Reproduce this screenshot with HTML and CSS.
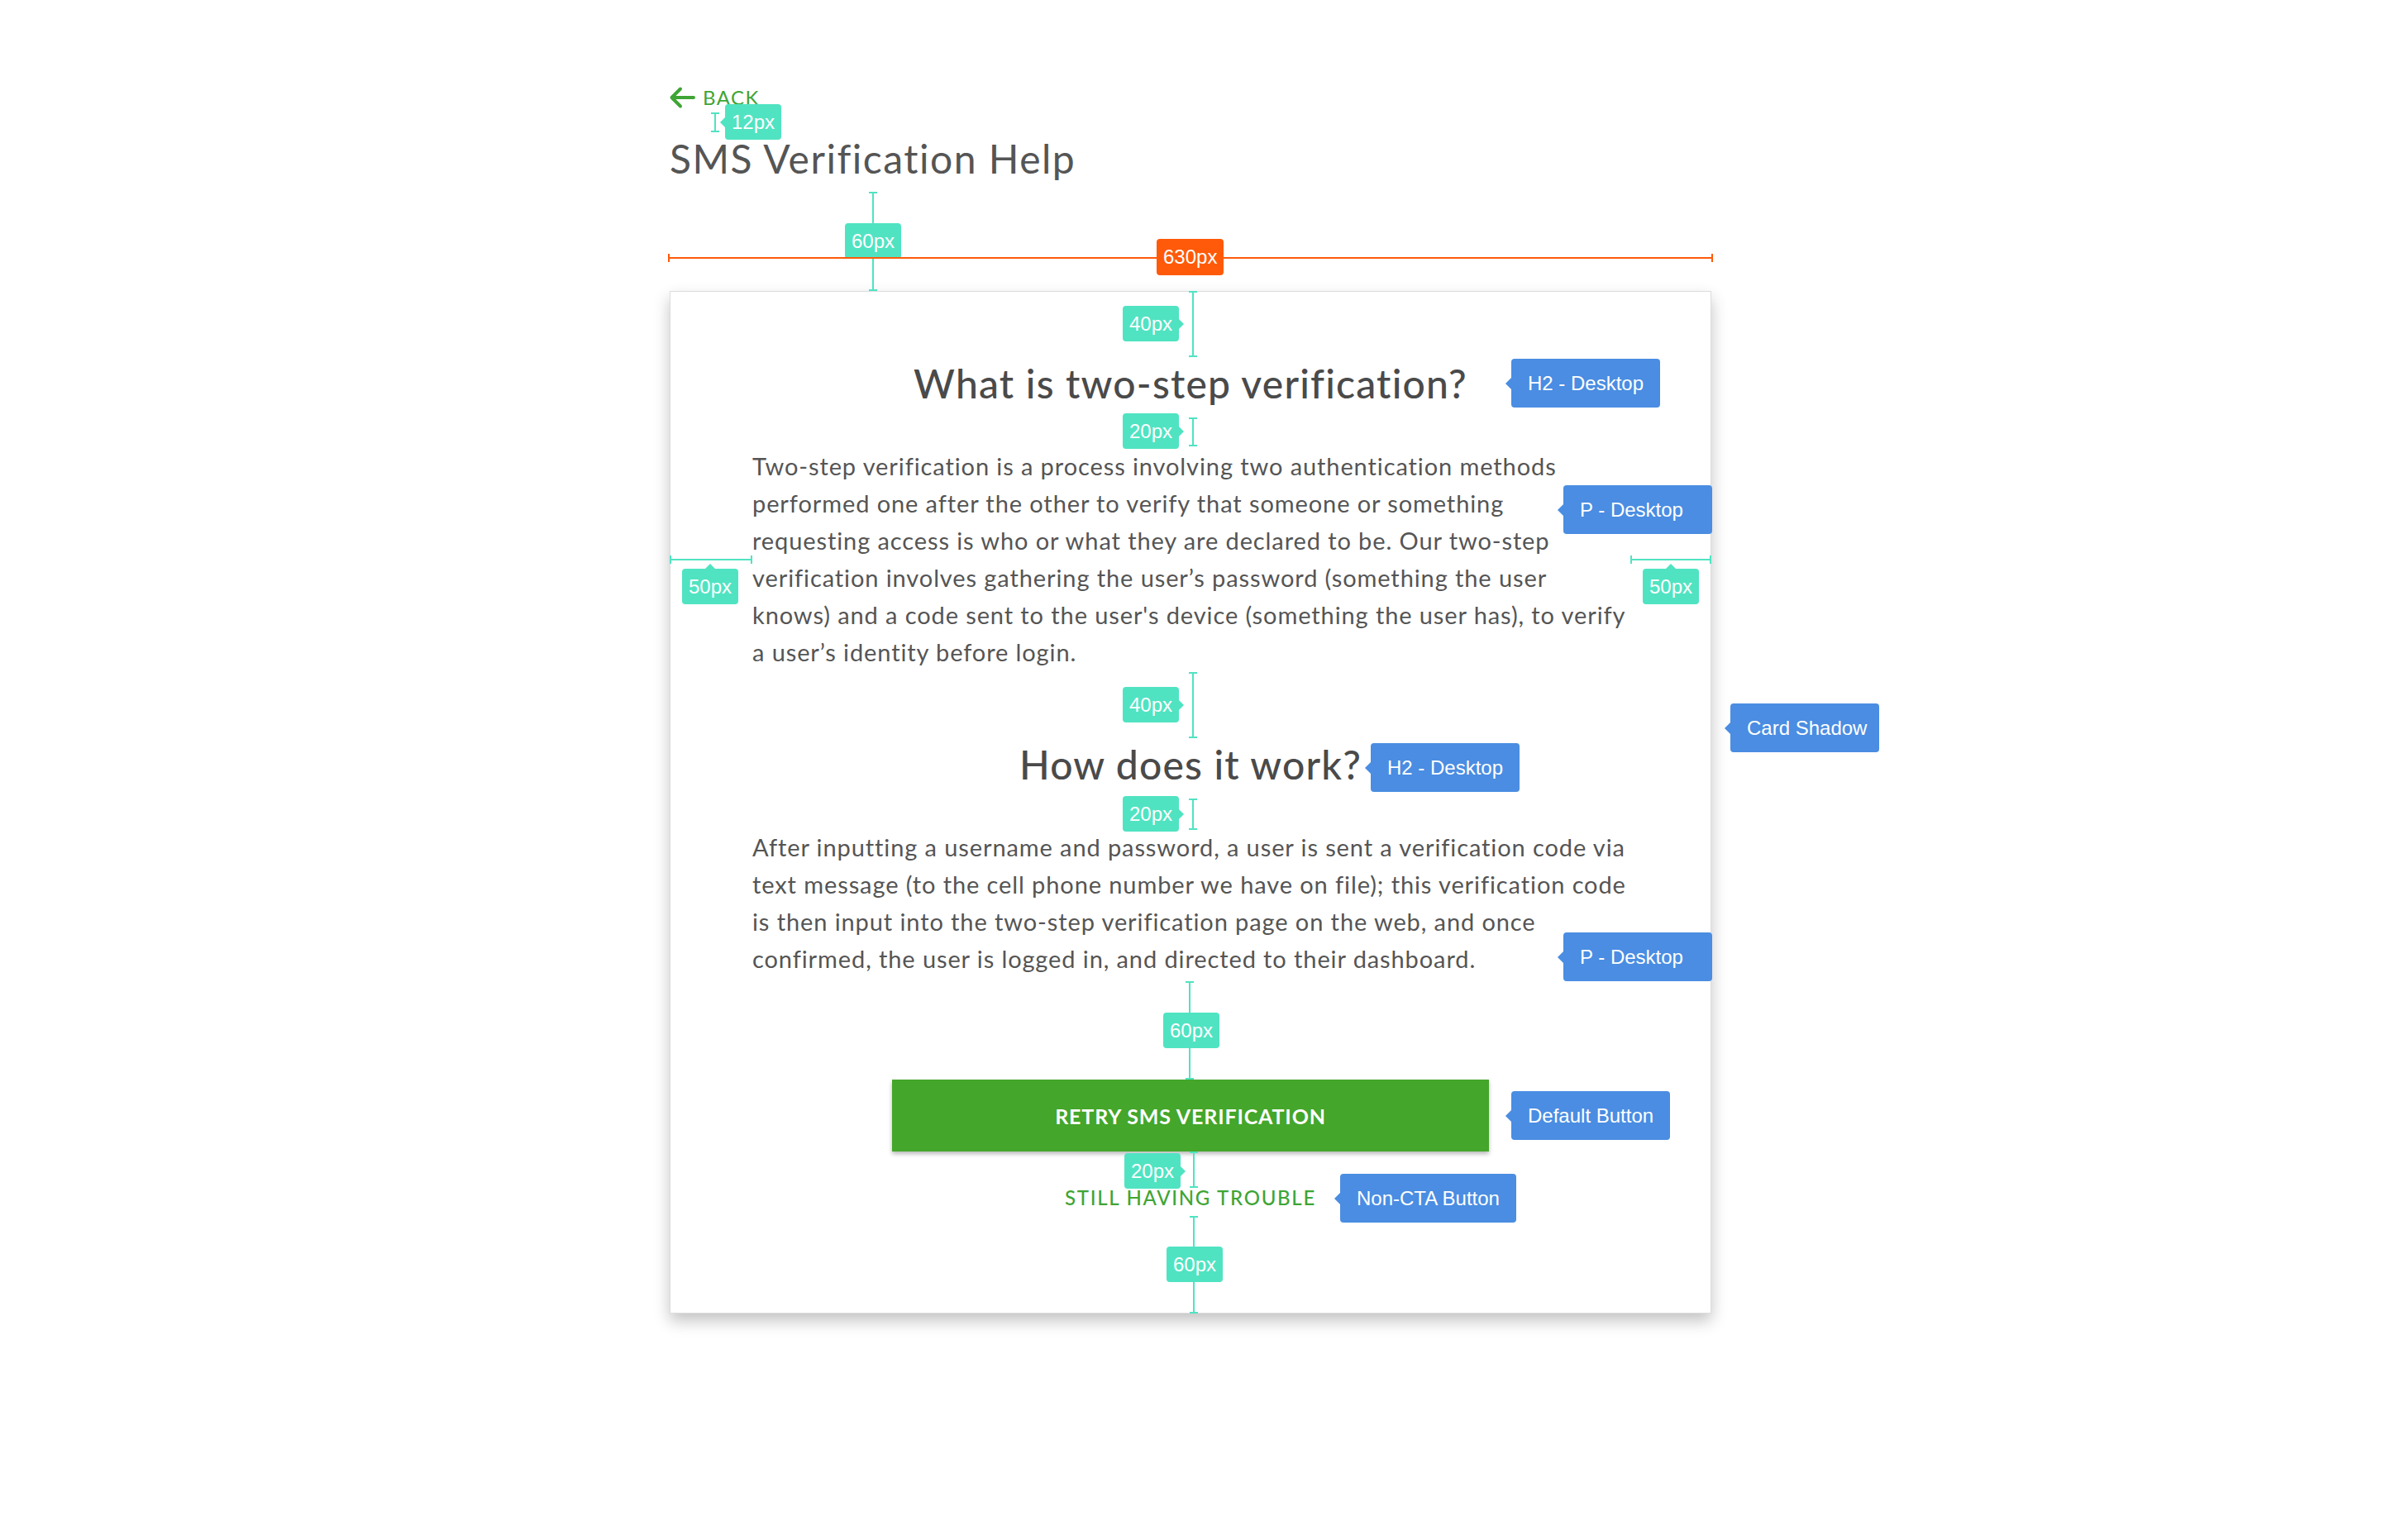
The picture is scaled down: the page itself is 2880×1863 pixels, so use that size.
FILE: index.html
```html
<!DOCTYPE html>
<html lang="en">
<head>
<meta charset="utf-8">
<title>SMS Verification Help</title>
<link rel="stylesheet" href="styles.css">
</head>
<body>
<div class="page">
  <a class="back" href="#">
    <svg class="back-icon" viewBox="0 0 32 28" width="32" height="28" aria-hidden="true">
      <path d="M30 14H4M14 3.5L3.5 14L14 24.5" fill="none" stroke="#3fa535" stroke-width="4" stroke-linecap="round" stroke-linejoin="round"/>
    </svg>
    <span>BACK</span>
  </a>
  <h1 class="title">SMS Verification Help</h1>

  <section class="card">
    <h2 class="card-heading">What is two-step verification?</h2>
    <p class="card-text">Two-step verification is a process involving two authentication methods<br>performed one after the other to verify that someone or something<br>requesting access is who or what they are declared to be. Our two-step<br>verification involves gathering the user’s password (something the user<br>knows) and a code sent to the user's device (something the user has), to verify<br>a user’s identity before login.</p>
    <h2 class="card-heading">How does it work?</h2>
    <p class="card-text">After inputting a username and password, a user is sent a verification code via<br>text message (to the cell phone number we have on file); this verification code<br>is then input into the two-step verification page on the web, and once<br>confirmed, the user is logged in, and directed to their dashboard.</p>
    <button class="btn-primary" type="button">RETRY SMS VERIFICATION</button>
    <a class="btn-link" href="#">STILL HAVING TROUBLE</a>
  </section>

  <div class="annotations" aria-hidden="true">
    <span class="vline m-12"></span>
    <span class="tag tag--space arrow-left t-12">12px</span>

    <span class="vline m-60a"></span>
    <span class="tag tag--space t-60a">60px</span>

    <span class="hline hline--size m-630"></span>
    <span class="tag tag--size t-630">630px</span>

    <span class="vline m-40a"></span>
    <span class="tag tag--space arrow-right t-40a">40px</span>

    <span class="vline m-20a"></span>
    <span class="tag tag--space arrow-right t-20a">20px</span>

    <span class="hline m-50l"></span>
    <span class="tag tag--space arrow-up t-50l">50px</span>

    <span class="hline m-50r"></span>
    <span class="tag tag--space arrow-up t-50r">50px</span>

    <span class="vline m-40b"></span>
    <span class="tag tag--space arrow-right t-40b">40px</span>

    <span class="vline m-20b"></span>
    <span class="tag tag--space arrow-right t-20b">20px</span>

    <span class="vline m-60b"></span>
    <span class="tag tag--space t-60b">60px</span>

    <span class="vline m-20c"></span>
    <span class="tag tag--space arrow-right t-20c">20px</span>

    <span class="vline m-60c"></span>
    <span class="tag tag--space t-60c">60px</span>

    <span class="tag tag--prop p-h2a">H2 - Desktop</span>
    <span class="tag tag--prop tag--wide p-pa">P - Desktop</span>
    <span class="tag tag--prop tag--wide p-shadow">Card Shadow</span>
    <span class="tag tag--prop tag--wide p-h2b">H2 - Desktop</span>
    <span class="tag tag--prop tag--wide p-pb">P - Desktop</span>
    <span class="tag tag--prop p-btn">Default Button</span>
    <span class="tag tag--prop p-link">Non-CTA Button</span>
  </div>
</div>
</body>
</html>
```

FILE: styles.css
```css
* { box-sizing: border-box; }

html, body {
  margin: 0;
  padding: 0;
  background: #ffffff;
}

body {
  font-family: "Lato", "Open Sans", sans-serif;
  color: #555555;
}

.page {
  position: relative;
  width: 1260px;
  margin: 0 auto;
  padding-top: 100px;
  padding-bottom: 200px;
}

/* ---------- header ---------- */
.back {
  display: flex;
  align-items: center;
  gap: 9px;
  height: 36px;
  color: #3fa535;
  text-decoration: none;
  font-size: 24px;
  line-height: 36px;
  letter-spacing: 1.5px;
  margin-left: -1px;
}

.back-icon { display: block; flex: none; }

.title {
  margin: 20px 0 124px;
  font-size: 48px;
  line-height: 72px;
  font-weight: 400;
  color: #555555;
  letter-spacing: 1.5px;
}

/* ---------- card ---------- */
.card {
  display: flex;
  flex-direction: column;
  border: 1px solid #dddddd;
  padding: 79px 99px 122px;
  background: #ffffff;
  box-shadow: 0 9px 18px rgba(0, 0, 0, 0.24);
}

.card-heading {
  margin: 0 0 45px;
  font-size: 48px;
  line-height: 64px;
  font-weight: 500;
  color: #4a4a4a;
  text-align: center;
  letter-spacing: 1.2px;
}

.card-text {
  margin: 0;
  font-size: 29px;
  line-height: 45px;
  color: #555555;
  white-space: nowrap;
  letter-spacing: 0.9px;
}

.card-text + .card-heading { margin-top: 82px; }

.btn-primary {
  display: block;
  align-self: center;
  width: 722px;
  height: 87px;
  margin-top: 124px;
  border: 0;
  background: #44a62a;
  color: #ffffff;
  font-family: "Lato", sans-serif;
  font-size: 25px;
  font-weight: 700;
  letter-spacing: 0.85px;
  box-shadow: 0 3px 5px rgba(0, 0, 0, 0.28);
  cursor: pointer;
}

.btn-link {
  display: block;
  margin-top: 39px;
  text-align: center;
  font-size: 24px;
  line-height: 34px;
  font-weight: 500;
  color: #3fa535;
  text-decoration: none;
  letter-spacing: 1.7px;
}

/* ---------- annotation overlay ---------- */
.annotations {
  position: absolute;
  left: 0;
  top: 0;
  width: 100%;
  height: 100%;
  pointer-events: none;
}

.vline, .hline {
  position: absolute;
  background: #50e3c2;
}

.vline { width: 2px; }
.vline::before, .vline::after {
  content: "";
  position: absolute;
  left: -4px;
  width: 10px;
  height: 2px;
  background: inherit;
}
.vline::before { top: 0; }
.vline::after { bottom: 0; }

.hline { height: 2px; }
.hline::before, .hline::after {
  content: "";
  position: absolute;
  top: -4px;
  width: 2px;
  height: 10px;
  background: inherit;
}
.hline::before { left: 0; }
.hline::after { right: 0; }

.hline--size { background: #ff5a0a; }

.tag {
  position: absolute;
  font-family: "Liberation Sans", Arial, sans-serif;
  font-size: 24px;
  color: #ffffff;
  white-space: nowrap;
  border-radius: 4px;
}

.tag--space {
  height: 43px;
  line-height: 43px;
  padding: 0 8px;
  background: #50e3c2;
}

.tag--size {
  height: 44px;
  line-height: 44px;
  padding: 0 8px;
  background: #ff5a0a;
}

.tag--prop {
  height: 59px;
  line-height: 59px;
  padding: 0 20px;
  background: #4a8de2;
}

.tag--prop::before {
  content: "";
  position: absolute;
  left: -7px;
  top: 50%;
  margin-top: -7px;
  border-style: solid;
  border-width: 7px 7px 7px 0;
  border-color: transparent #4a8de2 transparent transparent;
}

.tag--wide { width: 180px; }

.arrow-left::before,
.arrow-right::after,
.arrow-up::before {
  content: "";
  position: absolute;
  border-style: solid;
}

.arrow-left::before {
  left: -6px;
  top: 50%;
  margin-top: -6px;
  border-width: 6px 6px 6px 0;
  border-color: transparent #50e3c2 transparent transparent;
}

.arrow-right::after {
  right: -6px;
  top: 50%;
  margin-top: -6px;
  border-width: 6px 0 6px 6px;
  border-color: transparent transparent transparent #50e3c2;
}

.arrow-up::before {
  left: 50%;
  top: -6px;
  margin-left: -6px;
  border-width: 0 6px 6px 6px;
  border-color: transparent transparent #50e3c2 transparent;
}

/* measurement positions (canvas coordinates of the spec sheet) */
.m-12  { left: 54px;  top: 136px;  height: 24px; }
.t-12  { left: 67px;  top: 126px; }

.m-60a { left: 245px; top: 232px;  height: 120px; }
.t-60a { left: 212px; top: 270px; }

.m-630 { left: -2px;  top: 311px;  width: 1264px; }
.t-630 { left: 589px; top: 289px; }

.m-40a { left: 632px; top: 352px;  height: 80px; }
.t-40a { left: 548px; top: 370px; }

.m-20a { left: 632px; top: 505px;  height: 35px; }
.t-20a { left: 548px; top: 500px; }

.m-50l { left: 0;     top: 676px;  width: 100px; }
.t-50l { left: 15px;  top: 688px; }

.m-50r { left: 1162px; top: 676px; width: 98px; }
.t-50r { left: 1177px; top: 688px; }

.m-40b { left: 632px; top: 813px;  height: 80px; }
.t-40b { left: 548px; top: 831px; }

.m-20b { left: 632px; top: 966px;  height: 38px; }
.t-20b { left: 548px; top: 963px; }

.m-60b { left: 628px; top: 1187px; height: 119px; }
.t-60b { left: 597px; top: 1225px; }

.m-20c { left: 633px; top: 1393px; height: 44px; }
.t-20c { left: 550px; top: 1395px; }

.m-60c { left: 633px; top: 1471px; height: 118px; }
.t-60c { left: 601px; top: 1508px; }

.p-h2a    { left: 1018px; top: 434px; }
.p-pa     { left: 1081px; top: 587px; }
.p-shadow { left: 1283px; top: 851px; }
.p-h2b    { left: 848px;  top: 899px; }
.p-pb     { left: 1081px; top: 1128px; }
.p-btn    { left: 1018px; top: 1320px; }
.p-link   { left: 811px;  top: 1420px; }
```
